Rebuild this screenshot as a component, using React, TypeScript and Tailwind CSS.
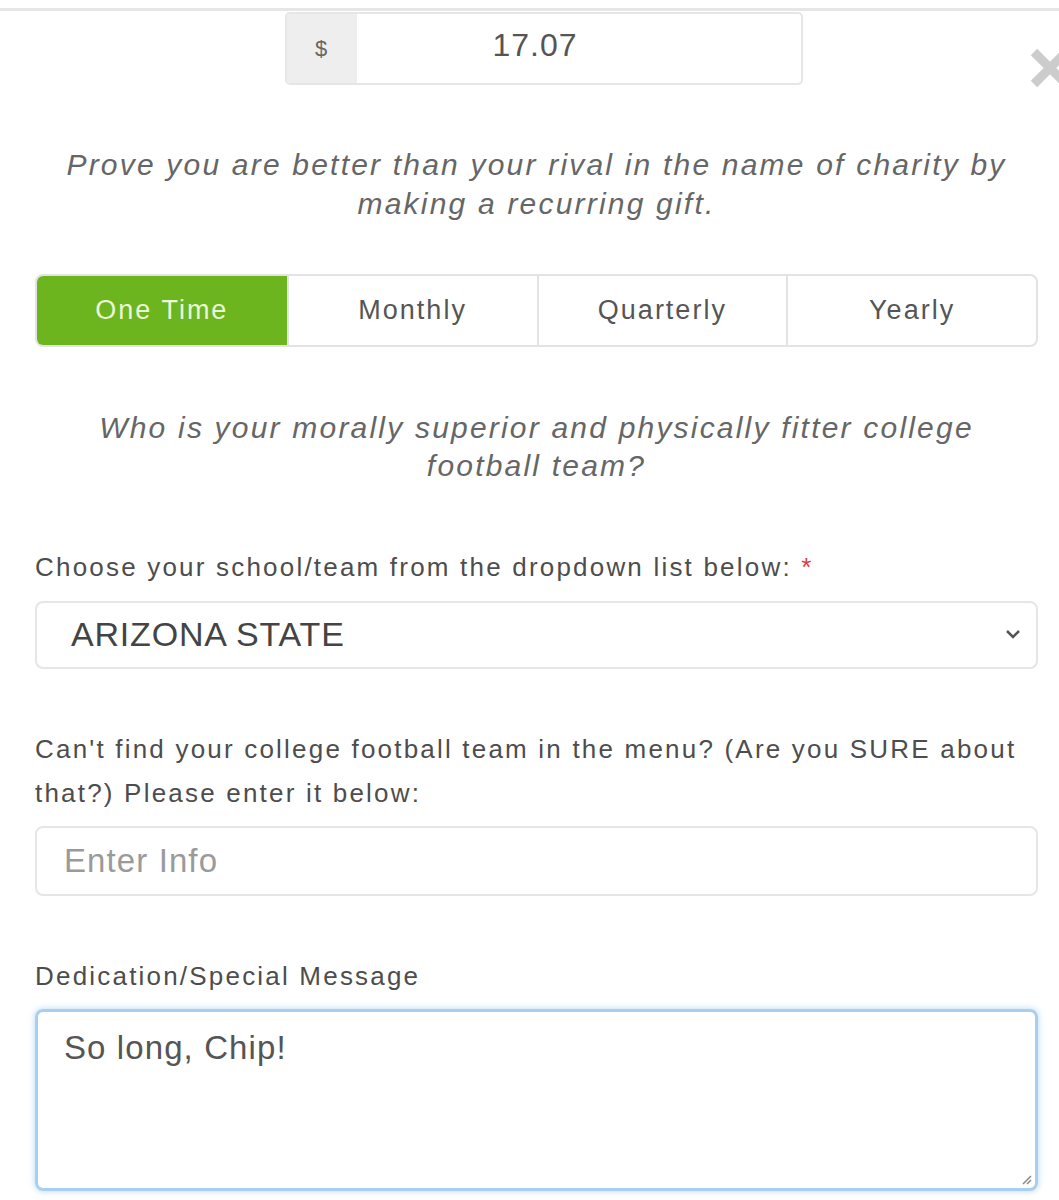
import React from 'react'

const tabs = ["One Time", "Monthly", "Quarterly", "Yearly"]

export default function App() {
  return (
    <div className="relative h-[1200px] w-[1059px] overflow-hidden bg-white font-['Liberation_Sans',Arial,sans-serif] tracking-[2px] text-[#555]">
      <div className="mt-[8px] h-[3px] bg-[#e6e6e6]" />

      {/* amount */}
      <div className="ml-[285px] mt-[1px] flex h-[73px] w-[518px] overflow-hidden rounded-[5px] border-2 border-[#e6e6e6]">
        <div className="flex w-[70px] items-center justify-center bg-[#eeeeee] text-[22px] text-[#666]">$</div>
        <div className="flex flex-1 items-center justify-center pr-[88px] pb-[8px] text-[32px] tracking-[1px] text-[#555]">17.07</div>
      </div>

      <button className="absolute left-[1028px] top-[46px]" aria-label="Close">
        <svg width="44" height="44" viewBox="0 0 44 44">
          <path d="M6 6L38 38M38 6L6 38" stroke="#cccccc" strokeWidth="9" />
        </svg>
      </button>

      <div className="pl-[35px] pr-[21px]">
        <p className="mt-[60px] text-center text-[30px] italic leading-[39px] tracking-[2.2px] text-[#666]">
          Prove you are better than your rival in the name of charity by
          <br />
          making a recurring gift.
        </p>

        {/* frequency */}
        <div className="mt-[51px] grid h-[73px] grid-cols-4 overflow-hidden rounded-[8px] border-2 border-[#e3e3e3]">
          {tabs.map((t, i) => (
            <div
              key={t}
              className={
                i === 0
                  ? "flex items-center justify-center bg-[#6cb51f] text-[27px] text-[#eaf7da]"
                  : "flex items-center justify-center border-l-2 border-[#e3e3e3] text-[27px] text-[#555]"
              }
            >
              {t}
            </div>
          ))}
        </div>

        <p className="mt-[62px] text-center text-[30px] italic leading-[38px] tracking-[2.2px] text-[#666]">
          Who is your morally superior and physically fitter college
          <br />
          football team?
        </p>

        <label className="mt-[64px] block text-[26px] leading-[36px] tracking-[2.2px] text-[#4d4d4d]">
          Choose your school/team from the dropdown list below: <span className="text-[#e23b3b]">*</span>
        </label>
        <div className="mt-[16px] flex h-[68px] items-center justify-between rounded-[8px] border-2 border-[#e6e6e6] pb-[2px] pl-[34px] pr-[14px]">
          <span className="text-[34px] tracking-[0.8px] text-[#444]">ARIZONA STATE</span>
          <svg width="18" height="12" viewBox="0 0 18 12" fill="none">
            <path d="M3 3l6 6 6-6" stroke="#555" strokeWidth="2.5" />
          </svg>
        </div>

        <label className="mt-[58px] block text-[26px] leading-[44px] tracking-[2.2px] text-[#4d4d4d]">
          Can't find your college football team in the menu? (Are you SURE about
          <br />
          that?) Please enter it below:
        </label>
        <div className="mt-[11px] flex h-[70px] items-center rounded-[8px] border-2 border-[#e6e6e6] pl-[27px]">
          <span className="text-[33px] tracking-[1.1px] text-[#9a9a9a]">Enter Info</span>
        </div>

        <label className="mt-[62px] block text-[26px] leading-[36px] tracking-[2.2px] text-[#4d4d4d]">Dedication/Special Message</label>
        <div className="relative mt-[15px] h-[182px] rounded-[8px] border-[3px] border-[#a9cff0] pl-[26px] pt-[11px] shadow-[0_0_6px_rgba(102,175,233,0.5)]">
          <span className="text-[33px] tracking-[1.1px] text-[#555]">So long, Chip!</span>
          <svg className="absolute bottom-[2px] right-[2px]" width="14" height="14" viewBox="0 0 14 14">
            <path d="M12 4L4 12M12 8L8 12" stroke="#888" strokeWidth="1.5" />
          </svg>
        </div>
      </div>
    </div>
  )
}
